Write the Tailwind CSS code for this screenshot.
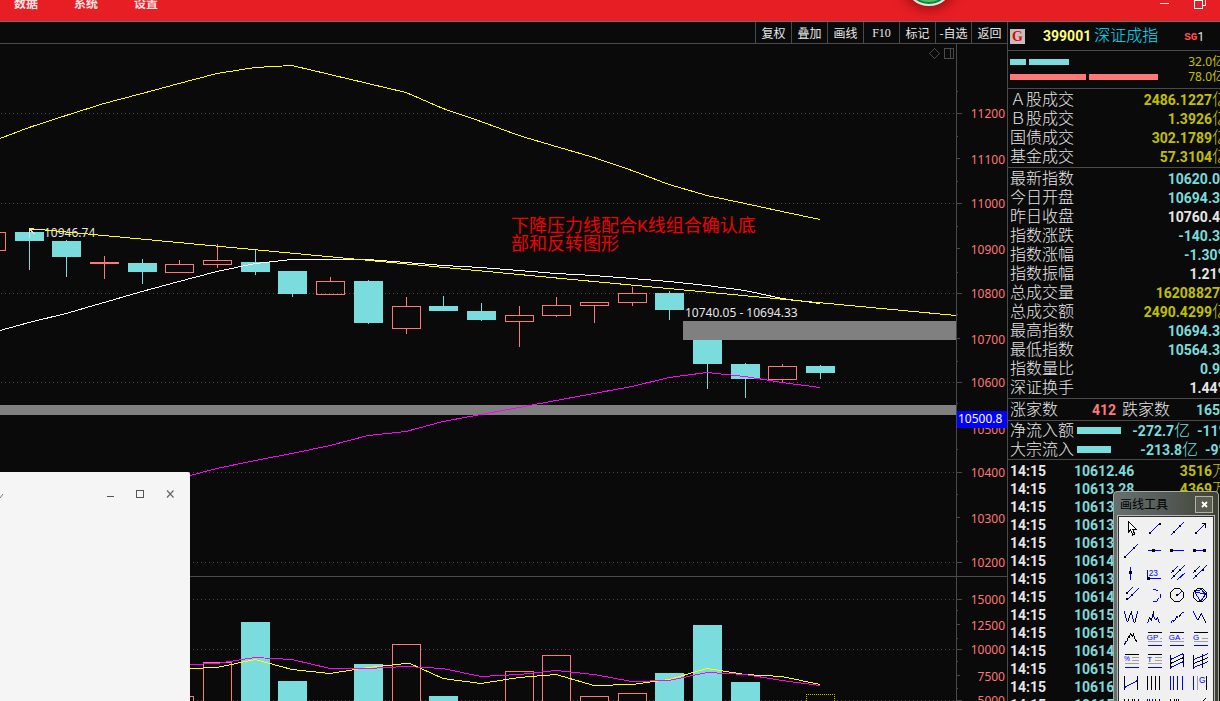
<!DOCTYPE html>
<html lang="zh-CN">
<head>
<meta charset="utf-8">
<title>深证成指 399001</title>
<script src="https://cdn.jsdelivr.net/npm/@tailwindcss/browser@4"></script>
</head>
<body class="h-screen overflow-hidden flex flex-col bg-[#0a0a0a] text-[#e6e6e6] font-['Noto_Sans','Noto_Sans_CJK_SC',sans-serif] text-xs">

<header class="relative shrink-0 h-[22px] overflow-hidden bg-[#e81e25] border-b border-[#6e6e6e] flex items-start justify-between">
  <nav class="-mt-[3px] pl-3.5 flex gap-9 font-['Noto_Sans_CJK_SC',sans-serif] font-bold leading-3 text-[#ffe4e4]">
    <a href="#">数据</a><a href="#">系统</a><a href="#">设置</a>
  </nav>
  <span class="absolute -top-[44px] left-[904px] size-[50px] rounded-full border-2 border-[#dfe9e4] bg-[#45c466] shadow-[inset_0_0_0_2px_#17803c,0_0_12px_4px_rgba(90,0,0,.5)]"></span>
  <div class="flex gap-[25px] pr-[13px]">
    <button type="button" aria-label="最小化"><svg width="9" height="12" shape-rendering="crispEdges"><path d="M0 3.500h9" stroke="#fff"/></svg></button>
    <button type="button" aria-label="还原"><svg width="13" height="12" shape-rendering="crispEdges" fill="none" stroke="#fff"><path d="M.5 0v8.500h8V0M.5 .5h8M9 5.500h2.500V0"/></svg></button>
  </div>
</header>

<main class="relative flex-1 min-h-0 flex">
  <section class="flex-1 min-w-0 flex flex-col">
    <div class="shrink-0 h-[22px] flex justify-end border-b border-[#4a4a4a] font-['Noto_Sans_CJK_SC',sans-serif] leading-5">
      <button type="button" class="w-9 border-l border-[#4a4a4a]">复权</button>
      <button type="button" class="w-9 border-l border-[#4a4a4a]">叠加</button>
      <button type="button" class="w-9 border-l border-[#4a4a4a]">画线</button>
      <button type="button" class="w-9 border-l border-[#4a4a4a] font-['Liberation_Serif',serif]">F10</button>
      <button type="button" class="w-9 border-l border-[#4a4a4a]">标记</button>
      <button type="button" class="w-9 border-l border-[#4a4a4a] whitespace-nowrap">-自选</button>
      <button type="button" class="w-9 border-l border-[#4a4a4a]">返回</button>
    </div>
    <div class="flex-1 min-h-0 flex">
      <svg class="flex-1 min-w-0 h-full" shape-rendering="crispEdges">
        <g transform="translate(0,-44)">
          <g id="grid" stroke="#4a4a4a" stroke-dasharray="1 3"></g>
          <path d="M0 576.500H3000" stroke="#4a4a4a"/>
          <g id="volumes"></g>
          <g id="candles"></g>
          <rect x="0" y="405" width="100%" height="10" fill="#808080"/>
          <rect x="683" y="321" width="273" height="19" fill="#808080"/>
          <g fill="#e6e6e6">
            <text x="44" y="237">10946.74</text>
            <text x="685" y="317">10740.05 - 10694.33</text>
          </g>
          <path d="M29.500 238v-9l5 5M29.500 229h5" stroke="#e0e0e0" fill="none"/>
          <g id="curves" fill="none"></g>
          <g fill="#f00000" class="text-lg font-['Liberation_Mono','Noto_Sans_CJK_SC',sans-serif]">
            <text x="511" y="232">下降压力线配合K线组合确认底</text>
            <text x="511" y="250">部和反转图形</text>
          </g>
          <path d="M934.500 48.500l5 5-5 5-5-5zM944.500 48.500h9v10h-9zM950.500 48.500v10" stroke="#4a4a4a" fill="none"/>
        </g>
      </svg>
      <svg class="shrink-0 w-[51px] h-full border-l border-[#4a4a4a]" shape-rendering="crispEdges">
        <g transform="translate(0,-44)">
          <g id="ticks" stroke="#4a4a4a"></g>
          <path d="M0 576.500H51" stroke="#4a4a4a"/>
          <g id="labels" fill="#ff7878" text-anchor="end"></g>
          <rect x="0" y="411" width="51" height="17" fill="#0000ff"/>
          <text x="1" y="423" fill="#ffffff">10500.8</text>
        </g>
      </svg>
    </div>
  </section>

  <aside class="shrink-0 w-[213px] overflow-hidden border-l border-[#4a4a4a]">
    <div class="w-[221px] flex flex-col font-['Roboto','Noto_Sans_CJK_SC',sans-serif] text-sm leading-4">
      <div class="h-[29px] border-b border-[#4a4a4a] pl-0.5 flex items-center whitespace-nowrap">
        <span class="size-[15px] bg-[#c0c0c0] text-[#f00000] font-['Liberation_Serif',serif] font-bold text-center leading-[15px]">G</span>
        <b class="ml-[18px] text-[#ffff80]">399001</b>
        <span class="ml-[3px] text-base leading-4 font-light text-[#00e4ff]">深证成指</span>
        <span class="ml-[26px] mt-0.5 flex items-center text-xs"><b class="text-[#ff5050] font-['Liberation_Mono',monospace] text-[11px]">SG</b>1</span>
      </div>
      <div class="h-[38px] border-b border-[#4a4a4a] pl-0.5 pr-[5px] pt-[3px] font-['Noto_Sans','Noto_Sans_CJK_SC',sans-serif] text-xs text-[#c0c000]">
        <div class="h-[15px] flex items-center gap-[3px]"><i class="w-4 h-1.5 bg-[#7adcdc]"></i><i class="w-10 h-1.5 bg-[#7adcdc]"></i><span class="ml-auto">32.0亿</span></div>
        <div class="h-[15px] flex items-center gap-[3px]"><i class="w-[76px] h-1.5 bg-[#ff7878]"></i><i class="w-[69px] h-1.5 bg-[#ff7878]"></i><span class="ml-auto">78.0亿</span></div>
      </div>
      <div class="py-px border-b border-[#4a4a4a]"><table class="w-full"><tbody id="turnover"></tbody></table></div>
      <div class="py-px border-b border-[#4a4a4a]"><table class="w-full"><tbody id="quotes"></tbody></table></div>
      <div class="h-[22px] border-b border-[#4a4a4a] pl-0.5 pt-px flex items-center font-bold">
        <span class="w-[82px] text-base leading-4 font-light">涨家数</span>
        <span class="w-[30px] text-[#ff7878]">412</span>
        <span class="text-base leading-4 font-light">跌家数</span>
        <span class="ml-auto pr-[9px] text-[#7adcdc]">165</span>
      </div>
      <div class="border-b border-[#4a4a4a] pl-0.5">
        <div class="h-[19px] flex items-center font-bold text-[#7adcdc]">
          <span class="w-[67px] text-base leading-4 font-light text-[#e6e6e6]">净流入额</span><i class="w-11 h-[7px] bg-[#7adcdc]"></i>
          <span class="ml-auto flex items-center">-272.7<span class="text-base leading-4 font-light">亿</span></span><span class="ml-[7px]">-11%</span>
        </div>
        <div class="h-[19px] flex items-center font-bold text-[#7adcdc]">
          <span class="w-[67px] text-base leading-4 font-light text-[#e6e6e6]">大宗流入</span><i class="w-[34px] h-[7px] bg-[#7adcdc]"></i>
          <span class="ml-auto flex items-center">-213.8<span class="text-base leading-4 font-light">亿</span></span><span class="ml-[7px]">-9%</span>
        </div>
      </div>
      <table class="mt-0.5 w-full font-bold"><tbody id="trades"></tbody></table>
    </div>
  </aside>

  <!-- light window, lower left -->
  <div class="absolute left-0 top-[450px] bottom-0 w-[190px] bg-[#f5f5f5] rounded-tr-xs flex items-start justify-between pr-[5px]">
    <svg class="mt-[21px]" width="4" height="6"><path d="M0 5L3 1" stroke="#777" fill="none"/></svg>
    <div class="mt-[11px] flex">
      <button type="button" aria-label="最小化" class="w-[30px] h-[22px] grid place-items-center"><svg width="8" height="8" shape-rendering="crispEdges"><path d="M1 6.500h7" stroke="#555"/></svg></button>
      <button type="button" aria-label="最大化" class="w-[30px] h-[22px] grid place-items-center"><svg width="8" height="8" shape-rendering="crispEdges"><path d="M.5.5h7v7h-7z" stroke="#555" fill="none"/></svg></button>
      <button type="button" aria-label="关闭" class="w-[30px] h-[22px] grid place-items-center"><svg width="8" height="8"><path d="M1 .5l6.500 7M7.500.5l-6.500 7" stroke="#666" stroke-width="1.200"/></svg></button>
    </div>
  </div>

  <!-- floating drawing-tool palette -->
  <div class="absolute right-px top-[469px] -bottom-5 w-[106px] flex flex-col overflow-hidden rounded-t-sm border border-[#a8a8a8] bg-linear-to-r from-[#66716f] via-[#555b58] to-[#3f422f] px-1">
    <div class="h-[24px] shrink-0 flex items-center justify-between pl-0.5 pr-px">
      <span class="font-['Noto_Sans_CJK_SC',sans-serif] leading-4 text-black">画线工具</span>
      <button type="button" aria-label="关闭" class="w-[18px] h-[17px] grid place-items-center border border-[#b0b0b0] bg-[#5a5d50]"><svg width="7" height="7"><path d="M1 1l5 5M6 1l-5 5" stroke="#fff" stroke-width="1.800"/></svg></button>
    </div>
    <div id="tools" class="flex-1 grid grid-cols-4 content-start border border-[#303030] outline outline-[#b8b8b8] bg-[#f0f0f0] pl-px pr-px"></div>
  </div>
</main>

<script>
const $ = id => document.getElementById(id);
const CY = '#7adcdc', RD = '#ff7878';

// price candles: x, body top, body bottom, wick top, wick bottom, falling
const candles = [[-23,232,251,232,251,0],[15,232,241,232,270,1],[52,241,257,240,277,1],[90,262,264,256,279,0],[128,263,272,259,284,1],[165,264,273,260,273,0],[203,260,265,244,268,0],[241,262,272,249,275,1],[278,271,294,271,297,1],[316,281,295,277,295,0],[354,281,323,280,324,1],[392,306,329,297,334,0],[429,306,311,296,311,1],[467,311,320,303,321,1],[505,315,322,306,347,0],[542,305,316,297,317,0],[580,302,306,302,323,0],[618,293,303,287,306,0],[655,293,310,291,320,1],[693,340,364,340,389,1],[731,364,379,363,398,1],[768,366,380,364,382,0],[806,366,373,365,379,1]];
$('candles').innerHTML = candles.map(([x,t,b,wt,wb,f]) => f
  ? `<rect x="${x}" y="${t}" width="29" height="${b-t}" fill="${CY}"/><rect x="${x+14}" y="${wt}" width="1" height="${wb-wt}" fill="${CY}"/>`
  : `<rect x="${x+14}" y="${wt}" width="1" height="${t-wt}" fill="${RD}"/><rect x="${x+14}" y="${b}" width="1" height="${wb-b}" fill="${RD}"/><rect x="${x+.5}" y="${t+.5}" width="28" height="${b-t-1}" fill="none" stroke="${RD}"/>`).join('');

// volume bars: x, top, kind (0 rising, 1 falling, 2 forecast)
const volumes = [[165,696,0],[203,662,0],[241,622,1],[278,681,1],[354,664,1],[392,644,0],[429,696,1],[505,671,0],[542,655,0],[580,696,0],[618,693,0],[655,673,1],[693,625,1],[731,682,1],[806,694,2]];
$('volumes').innerHTML = volumes.map(([x,t,k]) => k === 1
  ? `<rect x="${x}" y="${t}" width="29" height="90" fill="${CY}"/>`
  : `<rect x="${x+.5}" y="${t+.5}" width="28" height="90" fill="#0a0a0a" stroke="${k ? '#c0c000' : RD}" ${k ? 'stroke-dasharray="1 1" stroke-dashoffset="0.5"' : ''}/>`).join('');

$('grid').innerHTML = [113,203,293,382,472,562,599,649,700].map(y => `<path d="M1 ${y+.5}H3000"/>`).join('');

const curves = [
  ['#ffff00','0,138 29,127 66,115 104,103 142,93 179,83 217,73 255,67 292,65 330,74 368,83 406,92 443,108 481,121 519,135 556,146 594,157 632,170 669,184 707,195 745,203 782,211 820,219'],
  ['#ffffff','0,330 29,322 66,313 104,302 142,291 179,281 217,271 255,263 292,259 330,259 368,259 406,262 443,265 481,267 519,270 556,273 594,275 632,278 669,281 707,285 745,290 782,298 820,303'],
  ['#ffff00','29,228 956,315'],
  ['#ff00ff','190,475 217,468 255,460 292,453 330,445 368,435 406,431 443,421 481,414 519,407 556,400 594,393 632,386 669,377 707,372 745,376 782,382 820,387'],
  ['#ffff00','190,668 217,667 255,659 292,669 330,673 368,667 406,663 410,663 443,678 481,683 519,677 556,674 594,685 632,684 669,679 707,668 745,674 782,676 820,684'],
  ['#ff00ff','190,664 217,663 255,657 292,659 330,668 368,668 406,666 443,668 481,676 519,674 556,670 594,674 632,681 669,680 707,672 745,674 782,680 820,685']];
$('curves').innerHTML = curves.map(([c,p]) => `<polyline points="${p}" stroke="${c}" transform="translate(0,.5)"/>`).join('');

const labels = [[11200,113],[11100,159],[11000,203],[10900,249],[10800,293],[10700,339],[10600,382],[10500,429],[10400,472],[10300,518],[10200,562],[15000,599],[12500,625],[10000,649],[7500,676],[5000,700]];
$('labels').innerHTML = labels.map(([v,y]) => `<text x="48" y="${y+5}">${v}</text>`).join('');
$('ticks').innerHTML =
  [113,203,293,382,472,562,599,649,700].map(y => `<path d="M0 ${y+.5}h5"/>`).join('') +
  [158,248,338,427,517,624,675].map(y => `<path d="M0 ${y+.5}h3"/>`).join('') +
  [91,136,181,226,272,314,361,403,449,494,541,610,638,661,688].map(y => `<path d="M0 ${y+.5}h1"/>`).join('');

const unit = u => u ? `<span class="text-base leading-4 font-light">${u}</span>` : '';
const row = ([n,v,c,u,pad]) => `<tr class="h-[19px]"><th scope="row" class="p-0 pl-0.5 text-left text-base leading-4 font-light">${n}</th><td class="p-0"><div class="flex items-center justify-end font-bold ${pad ? 'pr-[9px]' : 'pr-px'}" style="color:${c}">${v}${unit(u)}</div></td></tr>`;
const OL = '#c0c000', WH = '#e6e6e6';
$('turnover').innerHTML = [['Ａ股成交','2486.1227',OL,'亿'],['Ｂ股成交','1.3926',OL,'亿'],['国债成交','302.1789',OL,'亿'],['基金成交','57.3104',OL,'亿']].map(row).join('');
$('quotes').innerHTML = [['最新指数','10620.0',CY,'',1],['今日开盘','10694.3',CY,'',1],['昨日收盘','10760.4',WH,'',1],['指数涨跌','-140.3',CY,'',1],['指数涨幅','-1.30%',CY],['指数振幅','1.21%',WH],['总成交量','16208827',OL,'',1],['总成交额','2490.4299',OL,'亿'],['最高指数','10694.3',CY,'',1],['最低指数','10564.3',CY,'',1],['指数量比','0.9',CY,'',1],['深证换手','1.44%',WH]].map(row).join('');

$('trades').innerHTML = [['10612.46','3516'],['10613.28','4369'],['10613'],['10613'],['10613'],['10614'],['10613'],['10614'],['10615'],['10615'],['10614'],['10615'],['10616'],['10615']].map(([p,v]) =>
  `<tr class="h-[18px]"><td class="p-0 pl-0.5 w-[66px]">14:15</td><td class="p-0 text-[#7adcdc]">${p}</td><td class="p-0"><div class="flex items-center justify-end pr-px text-[#c0c000]">${v ? v + unit('万') : ''}</div></td></tr>`).join('');

// tool glyphs, drawn on a 69x66 board; B blue stroke, K black stroke, G gray stroke, S square dot, T text
// coordinates snap to the centre of a 3-unit cell, which is one screen pixel
const snap = d => d.replace(/\d+/g, n => Math.floor(n / 3) * 3 + 1.5);
const B = d => `<path d="${snap(d)}" stroke="#0000ff"/>`, K = d => `<path d="${snap(d)}" stroke="#000"/>`, G = d => `<path d="${snap(d)}" stroke="#a0a0a0"/>`;
const S = (x,y,s=6) => { const f = v => Math.round((v - s/2) / 3) * 3; return `<rect x="${f(x)}" y="${f(y)}" width="${s}" height="${s}" fill="#000" stroke="none"/>`; };
const T = (x,y,t,s=26) => `<text x="${x}" y="${y}" font-size="${s}" fill="#0000ff" stroke="none">${t}</text>`;
const tools = [
  ['选择','<path d="M25 13V46L32 39L38 54L44 51L38 37H49Z" fill="#fff" stroke="#000"/>'],
  ['线段',B('M20 48L50 18')+S(20,48)+S(50,21)],
  ['直线',B('M13 56L53 16')+S(24,46)+S(43,26)],
  ['箭头',B('M18 48L49 18')+K('M37 18H49V31')+S(20,48)],
  ['射线',B('M14 54L53 15')+S(14,53)+S(43,26)],
  ['水平线',B('M12 34H51')+S(31,34,9)],
  ['水平射线',B('M13 34H51')+S(17,34,9)],
  ['水平线段',B('M13 34H50')+S(17,34,9)+S(47,34,9)],
  ['垂直线',B('M31 15V54')+S(31,34,9)],
  ['价格标注',B('M13 24V46M12 52H53')+T(17,44,'23',25)+S(16,52,9)],
  ['平行通道',B('M13 38L35 16M13 56L55 14M35 56L57 34')+S(20,31)+S(24,45)+S(43,26)],
  ['平行直线',B('M10 38L32 16M10 56L52 14')+S(17,31)+S(22,45)+S(42,27)],
  ['平行射线',B('M20 30L36 14M18 52L54 16')+S(20,29)+S(22,47)+S(36,36)],
  ['圆弧',B('M28 19H38L47 25M51 31V42M47 47L39 54H28')+S(51,36,3)],
  ['圆','<circle cx="33" cy="36" r="20" stroke="#000"/>'+B('M33 36L45 24')+S(33,36)],
  ['外接圆','<circle cx="33" cy="36" r="20" stroke="#000"/>'+B('M17 24L50 33L34 54ZM17 24L38 18L50 33')+S(17,24)+S(50,33)+S(34,54)],
  ['双底',B('M14 18L17 34L22 52M33 18L38 38L42 54M50 34L53 18')+K('M22 52L27 34L33 18M42 54L50 34')],
  ['头肩',B('M13 54L20 38M32 16V30L38 46M43 36L49 54')+K('M20 38L24 46L32 20M38 46L43 36')],
  ['上升波',B('M13 54L20 46L24 48M32 34L38 38M45 26L54 18')+K('M24 48L32 34M38 38L45 24')],
  ['下降波',B('M13 18L24 46M36 24L43 40')+K('M24 46L36 24M43 40L52 54')],
  ['八浪',B('M12 56L16 43L20 47')+K('M20 47L24 29L28 32L32 18L37 29L41 23L46 40L52 44')],
  ['黄金价位',K('M12 15H54')+T(11,38,'GP',24)+G('M12 43H54M48 34H54')+B('M12 55H54')],
  ['黄金目标',K('M9 15H51')+T(8,38,'GA',24)+G('M9 43H51M45 34H51')+B('M9 55H51')],
  ['黄金分割',K('M13 15H55')+T(12,38,'G',24)+G('M13 43H55M36 34H55')+B('M13 55H55')],
  ['百分比',K('M12 15H54')+T(12,37,'%',20)+G('M34 25H54M34 34H54M12 43H54')+B('M12 54H54')],
  ['波段线',K('M12 15H54')+T(13,39,'T',24)+G('M34 25H54M34 34H54M12 43H54')+B('M12 54H54')],
  ['回归带',K('M13 15V58M53 12V52M13 42L53 25')+B('M13 32L53 14M13 54L53 36')],
  ['回归通道',K('M13 15V58M41 12V54M13 42L57 25')+B('M13 32L57 14M13 54L57 36')],
  ['线性回归',K('M14 12V56M53 12V56')+B('M14 48L53 27')],
  ['周期线',K('M13 14V56M25 14V56M38 14V56M50 14V56')],
  ['费波周期',B('M13 14V56M21 14V56M34 14V56M50 14V56')],
  ['阻速线',B('M13 14V56')+G('M26 14V56')+T(30,36,'G',25)+K('M53 14V56')],
  ['周期尺一',K('M12 15V60M24 15V60M37 15V60M43 15V60M54 15V60')],
  ['周期尺二',B('M13 15V60M20 15V60M27 15V60')+K('M37 15V60M50 15V60')],
  ['周期尺三',K('M13 15V60M24 15V60M31 15V60M37 15V60M50 24V60')],
  ['角度线',K('M30 36L49 15')]];
$('tools').innerHTML = tools.map(([n,s]) => `<button type="button" aria-label="${n}" class="h-[22px] grid place-items-center"><svg width="23" height="22" viewBox="0 0 69 66" fill="none" stroke-width="3" shape-rendering="crispEdges" class="font-['Liberation_Sans',sans-serif]">${s}</svg></button>`).join('');
</script>
</body>
</html>
